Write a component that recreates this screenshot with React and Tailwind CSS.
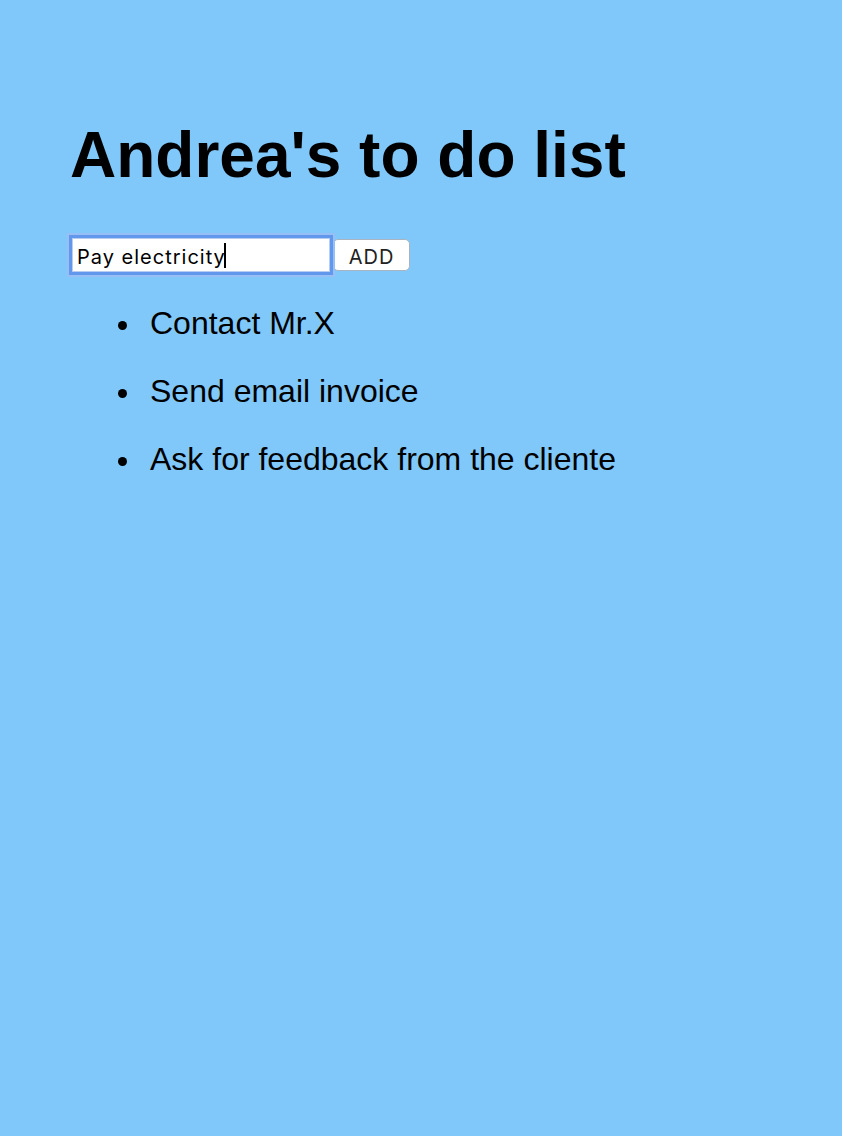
import { useState } from "react";

const initialTodos = ["Contact Mr.X", "Send email invoice", "Ask for feedback from the cliente"];

function App() {
  const [todos, setTodos] = useState(initialTodos);
  const [text, setText] = useState("Pay electricity");

  const handleAdd = () => {
    if (!text.trim()) return;
    setTodos((prev) => [...prev, text]);
    setText("");
  };

  return (
    <div className="min-h-[1136px] bg-[#80c8fa] pl-[70px] pt-[123px] font-['Liberation_Sans',Arial,sans-serif] text-black">
      <h1 className="text-[64px] leading-[64px] font-bold">Andrea's to do list</h1>

      <div className="mt-[51px] flex items-center">
        <div className="relative ml-[2px]">
          <input
            type="text"
            value={text}
            onChange={(e) => setText(e.target.value)}
            className="block h-[34px] w-[258px] border border-[#b9cdf0] bg-white px-[4px] pt-[3px] font-['Inter',sans-serif] text-[20px] tracking-[1px] text-black outline-none shadow-[0_0_0_3px_#6298ec,0_0_0_5px_#98bff5]"
          />
          <span className="absolute left-[152px] top-[5px] h-[25px] w-[1.5px] bg-black" />
        </div>
        <button
          onClick={handleAdd}
          className="ml-[3px] h-[32px] w-[77px] rounded-[5px] border border-[#a9b4c0] bg-white pt-[2px] font-['Inter',sans-serif] text-[20px] tracking-[1px] text-[#222]"
        >
          ADD
        </button>
      </div>

      <ul className="mt-[17px] pl-[48px]">
        {todos.map((todo) => (
          <li key={todo} className="flex items-center gap-[23px] text-[32px] leading-[68px]">
            <span className="mt-[4px] h-[9px] w-[9px] shrink-0 rounded-full bg-black" />
            <span>{todo}</span>
          </li>
        ))}
      </ul>
    </div>
  );
}

export default App;
